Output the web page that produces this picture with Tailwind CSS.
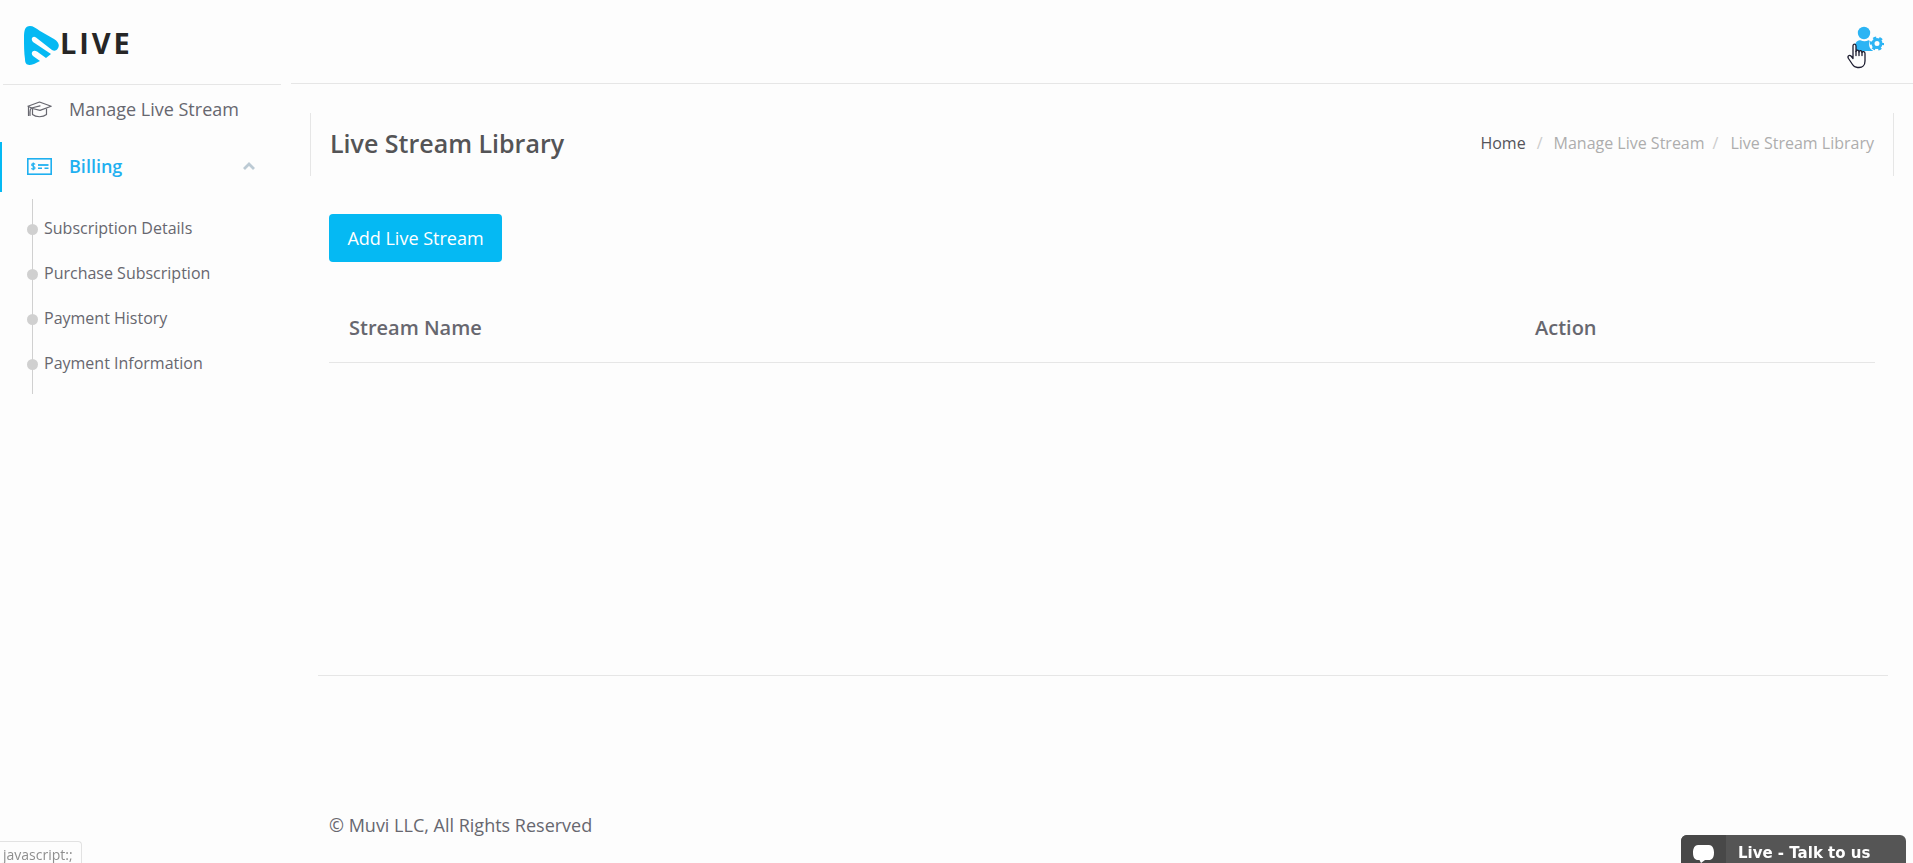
<!DOCTYPE html>
<html lang="en">
<head>
    <meta charset="UTF-8">
    <meta name="viewport" content="width=device-width, initial-scale=1.0">
    <title>Live Stream Library</title>
    <script src="https://cdn.jsdelivr.net/npm/@tailwindcss/browser@4"></script>
</head>
<body class="bg-[#fdfdfd] font-['Open_Sans',sans-serif] text-[#67676f]">
    <div class="flex min-h-screen overflow-hidden">

        <!-- Sidebar -->
        <aside class="w-[291px] shrink-0">
            <div class="ml-[3px] mr-[10px] h-[85px] border-b border-[#e6e6e6] pl-[21px] pt-[26px]">
                <a href="#" class="flex items-start text-[#262626]">
                    <svg class="h-[39px] w-[35px]" viewBox="0 0 35 39" fill="#05b9f3">
                        <path d="M0 12C0 4 1 0 6 0C9 0 12 2 16 5L30 13C35 16 36 20 33.500 23C32 25 30 25 28 24L12 11.500C9 9 6 13 9 16L27 28L22 32L13 25.500C9 23 6 27 9 30L16 35L10 38C4 40 1 39 1 33C0 27 0 19 0 12Z"/>
                    </svg>
                    <span class="pl-px text-[29px] font-bold leading-[33px] tracking-widest">LIVE</span>
                </a>
            </div>

            <nav class="text-[18px]">
                <a href="#" class="flex h-[50px] items-center border-l-2 border-transparent pl-[25px]">
                    <svg class="-mt-0.5 h-[17px] w-[25px]" viewBox="0 0 25 17" fill="none" stroke="#67676f" stroke-width="1.2" stroke-linejoin="round" stroke-linecap="round">
                        <path d="M1 5.200L12.500 1L24.200 5.200L13 9.400L5.500 7.500L1 5.200"/>
                        <path d="M13 4.800L4.500 7C3 8 3 9.500 3 11V14.500M1.500 6V14.500"/>
                        <path d="M5.500 8V13.500C9 16.500 16 16.500 19.500 13.500V8"/>
                    </svg>
                    <span class="pb-0.5 pl-[17px]">Manage Live Stream</span>
                </a>
                <a href="#" class="mt-[7px] flex h-[50px] items-center border-l-2 border-[#05b9f3] pl-[25px] text-[#1fb0f0]">
                    <svg class="-mt-0.5 h-[17px] w-[25px]" viewBox="0 0 25 17" fill="none" stroke="#1fb0f0">
                        <rect x="0.800" y="0.800" width="23.400" height="15.400" stroke-width="1.600"/>
                        <path d="M8 6.500C7.500 5.200 4.700 5.300 4.700 6.900C4.700 8.600 8 8 8 9.900C8 11.500 5 11.500 4.500 10.200M6.300 4.500V12.300" stroke-width="1.200"/>
                        <path d="M11 7H21.500" stroke-width="1.800"/>
                        <path d="M11 10.300H15M17.500 10.300H21.500" stroke-width="1.600"/>
                    </svg>
                    <span class="pb-0.5 pl-[17px] font-semibold">Billing</span>
                    <svg class="-mt-0.5 ml-auto mr-9 h-[8px] w-[12px]" viewBox="0 0 12 8" fill="none" stroke="#bccad4" stroke-width="2.800">
                        <path d="M1 7L6 2L11 7"/>
                    </svg>
                </a>

                <ul class="ml-[32px] mt-[7px] h-[195px] border-l border-[#d0d0d0] pt-[7px] text-[16px] leading-[45px]">
                    <li class="relative pl-[11px] before:absolute before:-left-[6px] before:top-[18px] before:size-[11px] before:rounded-full before:bg-[#d0d0d0]"><a href="#">Subscription Details</a></li>
                    <li class="relative pl-[11px] before:absolute before:-left-[6px] before:top-[18px] before:size-[11px] before:rounded-full before:bg-[#d0d0d0]"><a href="#">Purchase Subscription</a></li>
                    <li class="relative pl-[11px] before:absolute before:-left-[6px] before:top-[18px] before:size-[11px] before:rounded-full before:bg-[#d0d0d0]"><a href="#">Payment History</a></li>
                    <li class="relative pl-[11px] before:absolute before:-left-[6px] before:top-[18px] before:size-[11px] before:rounded-full before:bg-[#d0d0d0]"><a href="#">Payment Information</a></li>
                </ul>
            </nav>
        </aside>

        <div class="min-w-0 flex-1">
            <!-- Top bar -->
            <header class="flex h-[84px] justify-end border-b border-[#e6e6e6] pr-[29px] pt-[26px]">
                <button type="button" class="relative h-[26px] w-[30px]" aria-label="Account settings">
                    <svg class="h-[26px] w-[30px]" viewBox="0 0 30 26" fill="#2cb4f4">
                        <circle cx="10" cy="7" r="6.200"/>
                        <path d="M1 25V20C1 16 4 14.300 6.500 14.300C9 15.500 12 15.500 14.500 14.300C15.500 14.400 16 14.800 15.500 16C14.800 18 15 20 16 22C17 23.500 18.500 24 19 25Z"/>
                        <circle cx="23" cy="17.500" r="4" fill="none" stroke="#2cb4f4" stroke-width="3"/>
                        <circle cx="23" cy="17.500" r="5.900" fill="none" stroke="#2cb4f4" stroke-width="2.400" stroke-dasharray="3.090" stroke-dashoffset="1.500"/>
                    </svg>
                    <!-- Pointer -->
                    <svg class="absolute -left-[7px] top-[17px] h-[26px] w-[20px]" viewBox="0 0 20 26" fill="#fdfdfd" stroke="#1d1d30" stroke-width="1.300" stroke-linejoin="round">
                        <path d="M6 15.500V3C6 0.500 9 0.500 9 3V8.500C9.500 6.500 12 7 12 9C12.500 7 15 7.500 15 9.500C15.500 8 18 8.500 18 10.500V18C18 22 15.500 24.500 12 24.500H10.500C8 24.500 6.500 23 5.500 21.500L1.500 15.500C0 13 2.500 11.500 4 13Z"/>
                        <path d="M9 8.500V12.500M12 9V12.500M15 9.500V12.500" stroke-linecap="round"/>
                    </svg>
                </button>
            </header>

            <main class="mx-[19px] pt-[29px]">
                <div class="flex h-[63px] items-center justify-between border-x border-[#e6e6e6] px-[19px] pb-0.5">
                    <h1 class="text-[25px] font-semibold text-[#545456]">Live Stream Library</h1>
                    <ol class="flex pb-px text-[16px] text-[#adadad]">
                        <li><a href="#" class="text-[#54545a]">Home</a></li>
                        <li class="px-[11px] text-[#cccccc]">/</li>
                        <li><a href="#">Manage Live Stream</a></li>
                        <li class="pl-2 pr-3 text-[#cccccc]">/</li>
                        <li>Live Stream Library</li>
                    </ol>
                </div>

                <div class="px-[19px] pt-[38px]">
                    <button type="button" class="h-[48px] w-[173px] rounded bg-[#05b9f3] text-[18px] text-white">Add Live Stream</button>
                    <table class="mt-[32px] w-full table-fixed">
                        <thead>
                            <tr class="h-[68px] border-b border-[#e6e6e6] text-left text-[20px]">
                                <th class="px-5 font-semibold">Stream Name</th>
                                <th class="w-[360px] px-5 font-semibold">Action</th>
                            </tr>
                        </thead>
                        <tbody></tbody>
                    </table>
                </div>
            </main>

            <footer class="ml-[27px] mr-[25px] mt-[312px] border-t border-[#e6e6e6] px-[11px] pt-[136px] text-[18px] leading-[27px]">
                &copy; Muvi LLC, All Rights Reserved
            </footer>
        </div>
    </div>

    <!-- Link status -->
    <div class="fixed bottom-0 left-0 h-[22px] w-[82px] rounded-tr border-r border-t border-[#e2e2e2] pl-[3px] text-[14px] leading-[26px] text-[#8e8e8e]">javascript:;</div>

    <!-- Chat widget -->
    <button type="button" class="fixed bottom-0 right-[7px] flex h-[28px] w-[225px] overflow-hidden rounded-t-md bg-[#555555] text-left font-['DejaVu_Sans',sans-serif] text-[15px] font-bold leading-[37px] text-white">
        <span class="flex h-full w-[45px] justify-center bg-[#484848] pt-[10px]">
            <svg class="h-[18px] w-[21px]" viewBox="0 0 21 18" fill="#ffffff">
                <path d="M5 0H16C19 0 21 3 21 7.500C21 13 19 15 16 15H12L8 18L6.500 15H5C2 15 0 13 0 7.500C0 3 2 0 5 0Z"/>
            </svg>
        </span>
        <span class="pl-3">Live - Talk to us</span>
    </button>
</body>
</html>
